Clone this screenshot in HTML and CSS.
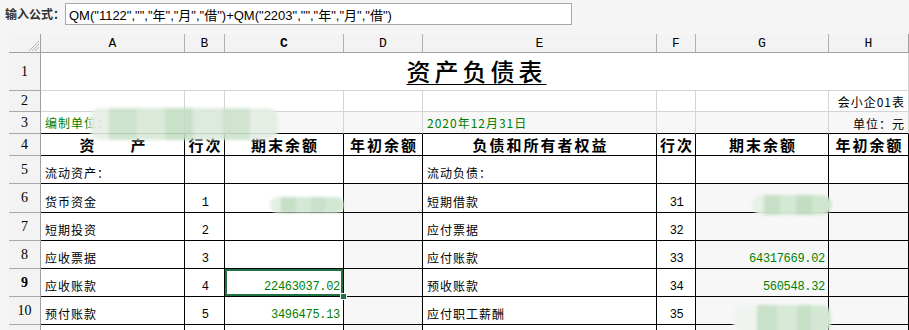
FILE: index.html
```html
<!DOCTYPE html>
<html lang="zh-CN">
<head>
    <meta charset="UTF-8">
    <meta name="viewport" content="width=device-width, initial-scale=1.0">
    <title>资产负债表</title>
    <link rel="stylesheet" href="styles.css">
</head>
<body>
    <div class="formula-bar">
        <label class="formula-label" for="formula">输入公式：</label>
        <input type="text" id="formula" class="formula-input" value='QM("1122","","年","月","借")+QM("2203","","年","月","借")'>
    </div>

    <div class="sheet">
        <!-- column headers -->
        <div class="corner">
            <svg width="10" height="10" viewBox="0 0 10 10">
                <path d="M10 0 L0 10 M10 3 L3 10 M10 6 L6 10" stroke="#b0b0b0" stroke-width="1"/>
            </svg>
        </div>
        <div class="col-head">A</div>
        <div class="col-head">B</div>
        <div class="col-head active">C</div>
        <div class="col-head">D</div>
        <div class="col-head">E</div>
        <div class="col-head">F</div>
        <div class="col-head">G</div>
        <div class="col-head">H</div>

        <!-- row 1 -->
        <div class="row-head">1</div>
        <div class="cell title-cell"><span class="title">资产负债表</span></div>

        <!-- row 2 -->
        <div class="row-head">2</div>
        <div class="cell light"></div>
        <div class="cell light"></div>
        <div class="cell light"></div>
        <div class="cell light"></div>
        <div class="cell light"></div>
        <div class="cell light"></div>
        <div class="cell light"></div>
        <div class="cell light right">会小企01表</div>

        <!-- row 3 -->
        <div class="row-head">3</div>
        <div class="cell light dark-bottom green">编制单位：</div>
        <div class="cell light dark-bottom shade"></div>
        <div class="cell light dark-bottom shade"></div>
        <div class="cell light dark-bottom shade"></div>
        <div class="cell light dark-bottom shade green">2020年12月31日</div>
        <div class="cell light dark-bottom shade"></div>
        <div class="cell light dark-bottom shade"></div>
        <div class="cell light dark-bottom shade right">单位：元</div>

        <!-- row 4 -->
        <div class="row-head">4</div>
        <div class="cell head">资　　产</div>
        <div class="cell head">行次</div>
        <div class="cell head">期末余额</div>
        <div class="cell head">年初余额</div>
        <div class="cell head">负债和所有者权益</div>
        <div class="cell head">行次</div>
        <div class="cell head">期末余额</div>
        <div class="cell head">年初余额</div>

        <!-- row 5 -->
        <div class="row-head">5</div>
        <div class="cell">流动资产：</div>
        <div class="cell"></div>
        <div class="cell"></div>
        <div class="cell"></div>
        <div class="cell">流动负债：</div>
        <div class="cell"></div>
        <div class="cell"></div>
        <div class="cell"></div>

        <!-- row 6 -->
        <div class="row-head">6</div>
        <div class="cell">货币资金</div>
        <div class="cell num-center">1</div>
        <div class="cell"></div>
        <div class="cell shade"></div>
        <div class="cell">短期借款</div>
        <div class="cell num-center">31</div>
        <div class="cell shade"></div>
        <div class="cell shade"></div>

        <!-- row 7 -->
        <div class="row-head">7</div>
        <div class="cell">短期投资</div>
        <div class="cell num-center">2</div>
        <div class="cell"></div>
        <div class="cell shade"></div>
        <div class="cell">应付票据</div>
        <div class="cell num-center">32</div>
        <div class="cell shade"></div>
        <div class="cell shade"></div>

        <!-- row 8 -->
        <div class="row-head">8</div>
        <div class="cell">应收票据</div>
        <div class="cell num-center">3</div>
        <div class="cell"></div>
        <div class="cell shade"></div>
        <div class="cell">应付账款</div>
        <div class="cell num-center">33</div>
        <div class="cell shade amount">64317669.02</div>
        <div class="cell shade"></div>

        <!-- row 9 -->
        <div class="row-head active">9</div>
        <div class="cell">应收账款</div>
        <div class="cell num-center">4</div>
        <div class="cell amount selected">22463037.02<span class="handle"></span></div>
        <div class="cell shade"></div>
        <div class="cell">预收账款</div>
        <div class="cell num-center">34</div>
        <div class="cell shade amount">560548.32</div>
        <div class="cell shade"></div>

        <!-- row 10 -->
        <div class="row-head">10</div>
        <div class="cell">预付账款</div>
        <div class="cell num-center">5</div>
        <div class="cell amount">3496475.13</div>
        <div class="cell shade"></div>
        <div class="cell">应付职工薪酬</div>
        <div class="cell num-center">35</div>
        <div class="cell shade"></div>
        <div class="cell shade"></div>

        <!-- row 11, only its top edge is in view -->
        <div class="row-head"></div>
        <div class="cell"></div>
        <div class="cell"></div>
        <div class="cell"></div>
        <div class="cell shade"></div>
        <div class="cell"></div>
        <div class="cell"></div>
        <div class="cell shade"></div>
        <div class="cell shade"></div>

        <!-- masked values -->
        <div class="mask mask-unit"></div>
        <div class="mask mask-c6"></div>
        <div class="mask mask-g6"></div>
        <div class="mask mask-g10"></div>
    </div>
</body>
</html>
```

FILE: styles.css
```css
body {
    margin: 0;
    background-color: #f5f5f5;
    font-family: "Noto Sans CJK SC", "Liberation Sans", sans-serif;
    color: #000;
    overflow: hidden;
}

.formula-bar {
    height: 34px;
    display: flex;
    align-items: flex-start;
    padding: 3px 0 0 5px;
    box-sizing: border-box;
}

.formula-label {
    font-size: 12px;
    font-weight: bold;
    color: #333;
    line-height: 22px;
    width: 60px;
}

.formula-input {
    width: 507px;
    height: 22px;
    box-sizing: border-box;
    margin: 0;
    padding: 0 3px;
    font-family: "Liberation Sans", "Noto Sans CJK SC", sans-serif;
    font-size: 13px;
    color: #000;
    background-color: #fff;
    border: 1px solid #a8a8a8;
    outline: none;
}

.sheet {
    position: relative;
    margin-left: 9px;
    width: 900px;
    display: grid;
    grid-template-columns: 32px 144px 40px 119px 79px 234px 39px 133px 80px;
    grid-template-rows: 19px 38px 21px 22px 22px 28px 29px 28px 28px 28px 28px 28px;
}

.corner,
.col-head,
.row-head {
    background-color: #f3f3f3;
    box-sizing: border-box;
    font-family: "Liberation Mono", monospace;
    font-size: 13px;
    color: #000;
}

.corner {
    border-right: 1px solid #a0a0a0;
    border-bottom: 1px solid #a0a0a0;
    display: flex;
    align-items: flex-end;
    justify-content: flex-end;
    padding: 0 1px 1px 0;
}

.col-head {
    border-right: 1px solid #b0b0b0;
    border-bottom: 1px solid #a0a0a0;
    display: flex;
    align-items: center;
    justify-content: center;
    padding-top: 1px;
}

.col-head:nth-child(9) {
    border-right-color: #a0a0a0;
}

.row-head {
    border-right: 1px solid #a0a0a0;
    border-bottom: 1px solid #a8a8a8;
    display: flex;
    align-items: center;
    justify-content: center;
    font-family: "Liberation Serif", serif;
    font-size: 14px;
}

.active {
    font-weight: bold;
}

.cell {
    box-sizing: border-box;
    background-color: #fff;
    border-right: 1px solid #000;
    border-bottom: 1px solid #000;
    display: flex;
    align-items: flex-end;
    padding: 0 3px 2px 4px;
    font-size: 12px;
    letter-spacing: 1px;
    line-height: 16px;
    white-space: nowrap;
    overflow: hidden;
}

.light {
    border-right-color: #d4d4d4;
    border-bottom-color: #d4d4d4;
}

.dark-bottom {
    border-bottom-color: #000;
}

.shade {
    background-color: #f7f7f7;
}

.green {
    color: #008000;
}

.right {
    justify-content: flex-end;
    padding-bottom: 1px;
}

.title-cell {
    grid-column: 2 / span 8;
    border-right-color: #d4d4d4;
    border-bottom-color: #d4d4d4;
    justify-content: center;
    align-items: center;
    padding: 0 0 2px 0;
}

.title {
    font-size: 24px;
    font-weight: 500;
    letter-spacing: 4px;
    margin-right: -4px;
    line-height: 28px;
    text-decoration: underline;
    text-decoration-thickness: 1px;
    text-underline-offset: 3px;
}

.head {
    justify-content: center;
    align-items: center;
    font-size: 15px;
    font-weight: bold;
    letter-spacing: 2px;
    padding: 0 0 0 2px;
}

.num-center {
    justify-content: center;
    font-family: "Liberation Mono", monospace;
    font-size: 12px;
    letter-spacing: -0.5px;
    padding-bottom: 1px;
}

.amount {
    justify-content: flex-end;
    font-family: "Liberation Mono", monospace;
    font-size: 12px;
    letter-spacing: -0.3px;
    color: #008000;
    padding-right: 3px;
    padding-bottom: 1px;
}

.selected {
    position: relative;
    overflow: visible;
    box-shadow: inset 0 0 0 2px #217346;
}

.handle {
    position: absolute;
    right: -4px;
    bottom: -4px;
    width: 5px;
    height: 5px;
    background-color: #217346;
    border: 1px solid #fff;
    z-index: 2;
}

.mask {
    position: absolute;
    border-radius: 10px;
    filter: blur(1.5px);
}

.mask-unit {
    left: 81px;
    top: 74px;
    width: 188px;
    height: 32px;
    background:
        linear-gradient(90deg, #e6eee6 0 10%, #c9e2c9 10% 25%, #d8e8d8 25% 40%, #c3dec3 40% 55%, #dbe9db 55% 70%, #cce3cc 70% 85%, #e4ece4 85%);
    opacity: 0.9;
}

.mask-c6 {
    left: 261px;
    top: 163px;
    width: 74px;
    height: 16px;
    background:
        linear-gradient(90deg, #e4efe4 0 15%, #c6e0c6 15% 35%, #d5e8d5 35% 55%, #c8e1c8 55% 75%, #d2e7d2 75%);
}

.mask-g6 {
    left: 743px;
    top: 161px;
    width: 80px;
    height: 20px;
    background:
        linear-gradient(90deg, #e6f0e6 0 15%, #c6e0c6 15% 35%, #d5e8d5 35% 55%, #c3dec3 55% 75%, #d0e6d0 75%);
}

.mask-g10 {
    left: 724px;
    top: 271px;
    width: 98px;
    height: 28px;
    background:
        linear-gradient(90deg, #f0f4f0 0 25%, #c8e1c8 25% 45%, #d8e9d8 45% 65%, #c6e0c6 65% 80%, #d4e7d4 80%);
}
```
